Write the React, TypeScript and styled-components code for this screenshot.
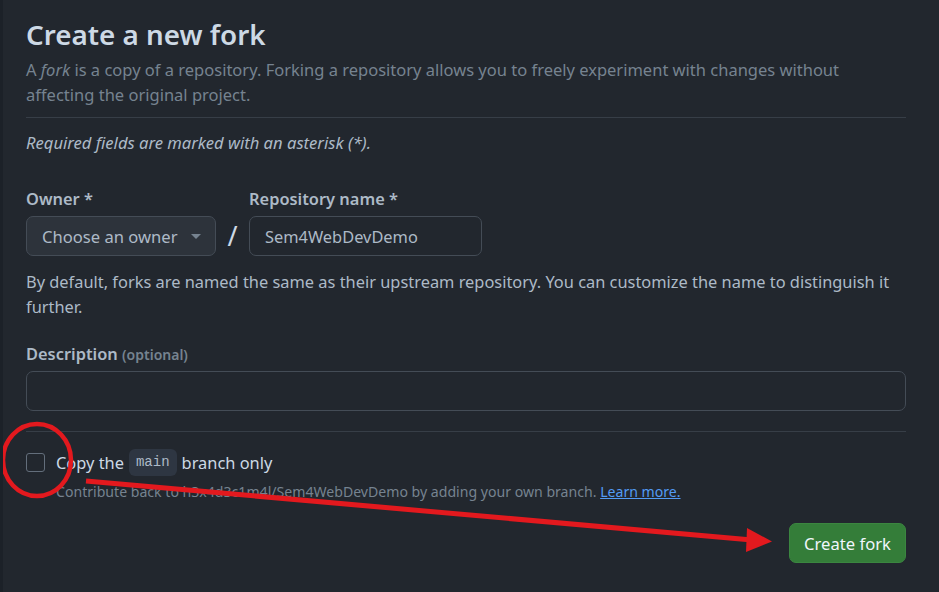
import React from "react";
import styled, { createGlobalStyle } from "styled-components";

const Global = createGlobalStyle`
  html, body { margin: 0; padding: 0; background: #22272e; }
  body { font-family: "Noto Sans", "Open Sans", sans-serif; }
  * { box-sizing: border-box; }
`;

const Page = styled.div`
  position: relative;
  width: 939px;
  height: 592px;
  overflow: hidden;
  background: #22272e;
  border-left: 3px solid #1c2128;
  padding: 16px 33px 0 23px;
  color: #adbac7;
  font-size: 16.4px;
  line-height: 25px;
`;

const Title = styled.h1`
  margin: 0;
  font-size: 27.8px;
  line-height: 36px;
  font-weight: 600;
  color: #cdd9e5;
`;

const Lead = styled.p`
  margin: 4.5px 0 0;
  font-size: 16.5px;
  color: #768390;
`;

const Divider = styled.hr<{ $top: number; $bottom: number }>`
  border: 0;
  height: 1px;
  background: #373e47;
  margin: ${(p) => p.$top}px 0 ${(p) => p.$bottom}px;
`;

const Note = styled.p`
  margin: 0;
  font-style: italic;
  font-size: 16.6px;
  color: #adbac7;
`;

const FieldRow = styled.div`
  display: flex;
  align-items: flex-end;
  margin-top: 31px;
`;

const Field = styled.div`
  display: flex;
  flex-direction: column;
  gap: 5.5px;
`;

const Label = styled.label`
  font-weight: 600;
  color: #adbac7;
`;

const Optional = styled.span`
  font-weight: 600;
  font-size: 14px;
  color: #768390;
`;

const SelectButton = styled.button`
  display: flex;
  align-items: center;
  gap: 12px;
  height: 40px;
  width: 190px;
  padding: 0 14px 0 15px;
  background: #2d333b;
  border: 1px solid #444c56;
  border-radius: 7px;
  color: #adbac7;
  font: inherit;
  font-size: 16.6px;
`;

const Caret = styled.span`
  width: 0;
  height: 0;
  border-left: 5px solid transparent;
  border-right: 5px solid transparent;
  border-top: 5px solid #768390;
  margin-left: auto;
`;

const Slash = styled.span`
  font-size: 27px;
  line-height: 40px;
  height: 40px;
  color: #cdd9e5;
  width: 33px;
  text-align: center;
`;

const TextInput = styled.div<{ $w?: string }>`
  height: 40px;
  width: ${(p) => p.$w ?? "233px"};
  border: 1px solid #444c56;
  border-radius: 7px;
  background: #22272e;
  padding: 0 15px;
  display: flex;
  align-items: center;
  color: #adbac7;
`;

const Helper = styled.p`
  margin: 12.5px 0 0;
  color: #adbac7;
`;

const DescField = styled(Field)`
  margin-top: 22px;
  gap: 4.5px;
`;

const CheckRow = styled.div`
  display: flex;
  align-items: center;
  gap: 11px;
  height: 27px;
`;

const Box = styled.span`
  width: 19px;
  height: 19px;
  border: 1px solid #636e7b;
  border-radius: 3px;
`;

const CheckText = styled.span`
  color: #cdd9e5;
  font-size: 16.4px;
  display: flex;
  align-items: center;
`;

const Code = styled.code`
  font-family: "Liberation Mono", "DejaVu Sans Mono", monospace;
  font-size: 14px;
  background: #2e3642;
  color: #adbac7;
  border-radius: 6px;
  padding: 0 7px;
  height: 27px;
  line-height: 27px;
  margin: 0 5px;
`;

const SubNote = styled.p`
  margin: 6px 0 0 30px;
  font-size: 14.1px;
  line-height: 20px;
  color: #768390;
`;

const Link = styled.a`
  color: #539bf5;
  text-decoration: underline;
`;

const Actions = styled.div`
  display: flex;
  justify-content: flex-end;
  margin-top: 21px;
`;

const Primary = styled.button`
  height: 40px;
  width: 117px;
  background: #347d39;
  border: 1px solid #3b8640;
  border-radius: 7px;
  color: #f0f6fc;
  font: inherit;
  font-size: 16.6px;
`;

const Overlay = styled.svg`
  position: absolute;
  left: -3px;
  top: 0;
  pointer-events: none;
`;

export default function App() {
  return (
    <>
      <Global />
      <Page>
        <Title>Create a new fork</Title>
        <Lead>
          A <i>fork</i> is a copy of a repository. Forking a repository allows you to freely experiment with changes without
          affecting the original project.
        </Lead>
        <Divider $top={10.5} $bottom={11.5} />
        <Note>Required fields are marked with an asterisk (*).</Note>
        <FieldRow>
          <Field>
            <Label>Owner *</Label>
            <SelectButton>
              Choose an owner <Caret />
            </SelectButton>
          </Field>
          <Slash>/</Slash>
          <Field>
            <Label>Repository name *</Label>
            <TextInput>Sem4WebDevDemo</TextInput>
          </Field>
        </FieldRow>
        <Helper>
          By default, forks are named the same as their upstream repository. You can customize the name to distinguish it
          further.
        </Helper>
        <DescField>
          <Label>
            Description <Optional>(optional)</Optional>
          </Label>
          <TextInput $w="880px" />
        </DescField>
        <Divider $top={20} $bottom={17} />
        <CheckRow>
          <Box />
          <CheckText>
            Copy the <Code>main</Code> branch only
          </CheckText>
        </CheckRow>
        <SubNote>
          Contribute back to h3x4d3c1m4l/Sem4WebDevDemo by adding your own branch. <Link>Learn more.</Link>
        </SubNote>
        <Actions>
          <Primary>Create fork</Primary>
        </Actions>
        <Overlay width="939" height="592" viewBox="0 0 939 592">
          <ellipse cx="37" cy="460" rx="34" ry="36" fill="none" stroke="#e3191e" strokeWidth="4.5" />
          <line x1="86" y1="481" x2="752" y2="540" stroke="#e3191e" strokeWidth="5" />
          <polygon points="772,541.5 747,528 746,552" fill="#e3191e" />
        </Overlay>
      </Page>
    </>
  );
}
